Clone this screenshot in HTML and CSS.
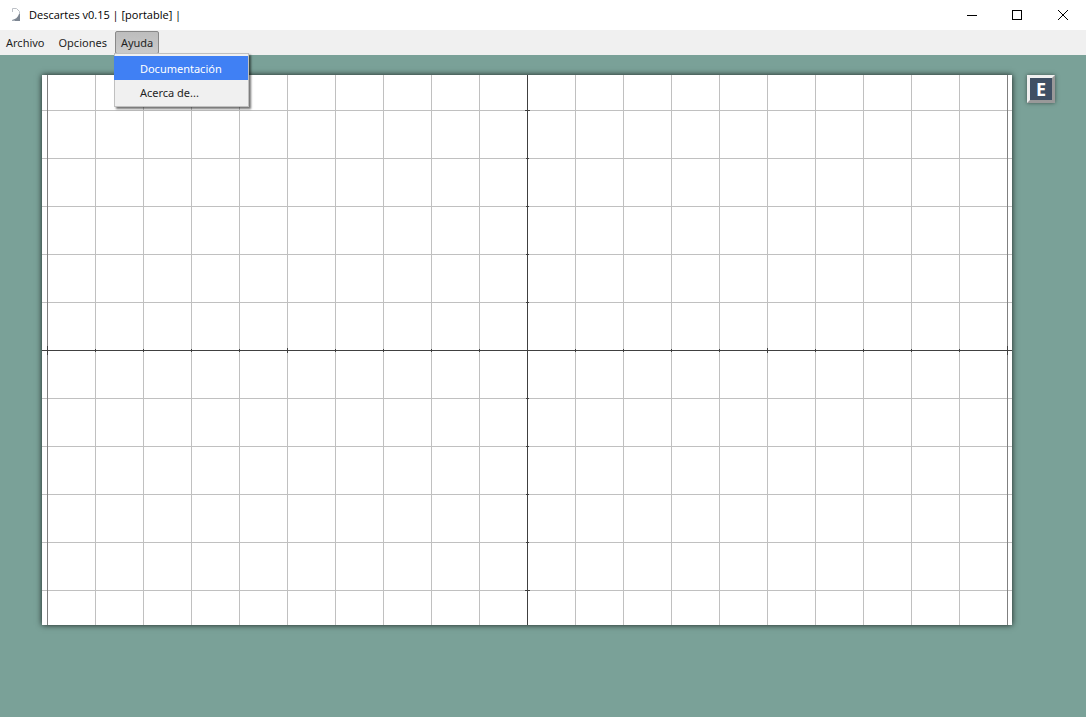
FILE: index.html
```html
<!DOCTYPE html>
<html lang="es">
<head>
<meta charset="utf-8">
<meta name="viewport" content="width=device-width, initial-scale=1">
<title>Descartes v0.15</title>
<link rel="stylesheet" href="styles.css">
</head>
<body>
<header class="titlebar">
  <svg class="app-icon" viewBox="0 0 10 14" aria-hidden="true">
    <path d="M1.500 4V.5h4l3 3v5" fill="none" stroke="#bcc0c6"/>
    <path d="M9 6v7H1v-1C4 11.500 7 9.500 8 6z" fill="#7d8692"/>
    <path d="M1 12.500h3" fill="none" stroke="#a4abb4"/>
  </svg>
  <h1 class="title">Descartes v0.15 | [portable] |</h1>
  <div class="window-controls">
    <button class="window-button" type="button" aria-label="Minimizar">
      <svg class="window-icon" viewBox="0 0 11 11"><path d="M1 5.500h10"/></svg>
    </button>
    <button class="window-button" type="button" aria-label="Maximizar">
      <svg class="window-icon" viewBox="0 0 11 11"><path d="M.5.5h9v9h-9z"/></svg>
    </button>
    <button class="window-button" type="button" aria-label="Cerrar">
      <svg class="window-icon window-icon-close" viewBox="0 0 11 11"><path d="M0 0l10 10M10 0l-10 10"/></svg>
    </button>
  </div>
</header>
<nav class="menubar">
  <button class="menu-button" type="button">Archivo</button>
  <button class="menu-button" type="button">Opciones</button>
  <div class="menu-holder">
    <button class="menu-button menu-button-open" type="button" aria-haspopup="true" aria-expanded="true">Ayuda</button>
    <div class="menu" role="menu">
      <button class="menu-item menu-item-selected" type="button" role="menuitem">Documentación</button>
      <button class="menu-item" type="button" role="menuitem">Acerca de...</button>
    </div>
  </div>
</nav>
<main class="workspace">
  <svg class="scene" viewBox="0 0 970 550" role="img" aria-label="Plano cartesiano">
    <defs>
      <pattern id="unit" x="5" y="35" width="48" height="48" patternUnits="userSpaceOnUse">
        <path d="M0 .5h48M.5 0v48" stroke="#c0c0c0"/>
      </pattern>
    </defs>
    <rect width="970" height="550" fill="#fff"/>
    <rect width="970" height="550" fill="url(#unit)"/>
    <path d="M5.500 0v550M965.500 0v550" stroke="#808080"/>
    <g stroke="#404040">
      <path d="M0 275.500h970M485.500 0v550"/>
      <path d="M5 275.500h961" stroke-width="3" stroke-dasharray="1 47"/>
      <path d="M485.500 35v481" stroke-width="3" stroke-dasharray="1 47"/>
      <path d="M245.500 273v5M725.500 273v5M483 35.500h5M483 515.500h5"/>
      <path d="M5.500 271v9M965.500 271v9"/>
    </g>
  </svg>
  <button class="edit-button" type="button" aria-label="Editar">E</button>
</main>
</body>
</html>
```
FILE: styles.css
```css
* {
  box-sizing: border-box;
}

body {
  margin: 0;
  min-height: 100vh;
  display: flex;
  flex-direction: column;
  background: #7aa198;
  color: #1f1f1f;
  font: 11px/16px "Noto Sans", "Open Sans", sans-serif;
}

button {
  margin: 0;
  padding: 0;
  border: 0;
  background: none;
  color: inherit;
  font: inherit;
}

.titlebar {
  display: flex;
  align-items: center;
  height: 30px;
  padding-left: 11px;
  background: #fff;
  color: #000;
}

.app-icon {
  width: 10px;
  height: 14px;
}

.title {
  margin: 0 auto 0 8px;
  font: 11px/16px "Open Sans", "Noto Sans", sans-serif;
}

.window-controls {
  display: flex;
}

.window-button {
  display: flex;
  align-items: center;
  justify-content: center;
  width: 46px;
  height: 28px;
}

.window-icon {
  width: 11px;
  height: 11px;
  fill: none;
  stroke: #000;
  shape-rendering: crispEdges;
}

.window-icon-close {
  overflow: visible;
  shape-rendering: auto;
}

.menubar {
  display: flex;
  height: 25px;
  padding: 1px 0;
  gap: 2px;
  background: #f0f0f0;
}

.menu-button {
  height: 23px;
  padding: 0 5px;
  border: 1px solid transparent;
  border-radius: 2px;
}

.menu-holder {
  position: relative;
}

.menu-button-open {
  border-color: #888;
  background: linear-gradient(#bdbdbd, #cacaca);
}

.menu {
  position: absolute;
  top: 22px;
  left: -1px;
  display: flex;
  flex-direction: column;
  width: 135px;
  padding: 2px 0;
  border: 1px solid #c0c0c0;
  background: #f0f0f0;
  box-shadow: 2px 2px 2px rgba(0, 0, 0, 0.55);
}

.menu-item {
  height: 24px;
  padding: 2px 25px 0;
  text-align: left;
}

.menu-item-selected {
  margin-left: -1px;
  padding-left: 26px;
  background: #4080f4;
  color: #fff;
}

.workspace {
  display: flex;
  align-items: flex-start;
  gap: 15px;
  padding: 20px 31px 20px 42px;
}

.scene {
  flex: 1;
  min-width: 0;
  height: auto;
  box-shadow: 0 0 6px rgba(0, 0, 0, 0.8);
  shape-rendering: crispEdges;
}

.edit-button {
  width: 28px;
  height: 28px;
  border: 3px solid;
  border-color: #f0f0f0 #999 #999 #f0f0f0;
  background: #405064;
  box-shadow: 0 0 4px rgba(0, 0, 0, 0.5);
  color: #fff;
  font: bold 18px/22px "Open Sans", "Noto Sans", sans-serif;
}
```
